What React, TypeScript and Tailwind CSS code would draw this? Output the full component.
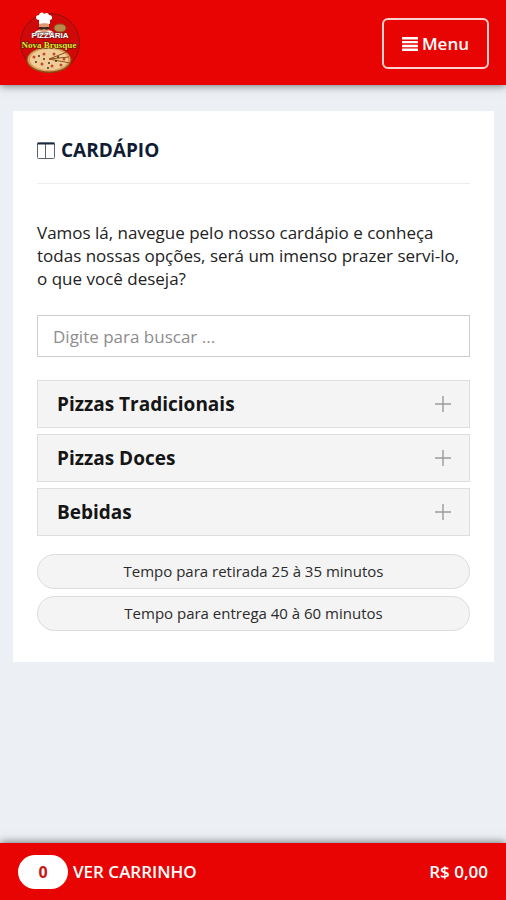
import { useState } from 'react';

const categories = ['Pizzas Tradicionais', 'Pizzas Doces', 'Bebidas'];
const times = ['Tempo para retirada 25 à 35 minutos', 'Tempo para entrega 40 à 60 minutos'];

const Logo = () => (
  <svg viewBox="0 0 64 64" className="size-16" role="img" aria-label="Pizzaria Nova Brusque">
    <circle cx="32" cy="32" r="29.5" fill="#d00807" stroke="#8c1210" />
    {/* chef */}
    <path d="M16 24c0-4 3-5 10-5s10 1 10 5z" fill="#f3efec" />
    <path d="M21 11h10v8c-2 3-8 3-10 0z" fill="#d99a72" />
    <path d="M20 17c2-2 4 0 6-1 2 1 4-1 6 1-1 2-4 2-6 1-2 1-5 1-6-1z" fill="#3d2119" />
    <path d="M21 13V9c-4 0-4-5 0-5 1-3 4-3 5-1 2-2 5-1 5 1 4 0 4 5 1 5v4c-3-1-8-1-11 0z" fill="#fff" />
    <ellipse cx="42" cy="17" rx="6" ry="4" fill="#b98a4c" stroke="#8a5a24" />
    {/* pizza */}
    <ellipse cx="31" cy="49" rx="22.5" ry="13" fill="#8f4d1a" />
    <ellipse cx="31" cy="48.5" rx="21.5" ry="12" fill="#d9a05c" />
    <ellipse cx="31" cy="48.5" rx="19" ry="10.5" fill="#f0cd98" />
    <path d="M31 48l18-7M31 48l21 4M31 48l20-2" stroke="#8f4d1a" strokeWidth="1" />
    <g fill="#c4492a">
      <circle cx="16" cy="46" r="1.5" />
      <circle cx="24" cy="53" r="1.5" />
      <circle cx="26" cy="43" r="1.5" />
      <circle cx="34" cy="55" r="1.5" />
      <circle cx="36" cy="43" r="1.5" />
      <circle cx="43" cy="54" r="1.5" />
      <circle cx="46" cy="48" r="1.5" />
    </g>
    <g fill="#3f3518">
      <circle cx="18" cy="51" r="1" />
      <circle cx="21" cy="45" r="1" />
      <circle cx="26" cy="48" r="1" />
      <circle cx="38" cy="50" r="1" />
      <circle cx="30" cy="57" r="1" />
      <circle cx="31" cy="52" r="1" />
      <circle cx="40" cy="46" r="1" />
    </g>
    <text x="32" y="27" textAnchor="middle" fontFamily="'Liberation Sans', sans-serif" fontWeight="700" fontSize="8" fill="#fff" stroke="#5a2a22" strokeWidth="1" paintOrder="stroke">
      PIZZARIA
    </text>
    <text x="31" y="37" textAnchor="middle" fontFamily="'Liberation Serif', serif" fontWeight="700" fontSize="9" fill="#f5e02c" stroke="#3a2408" strokeWidth="1" paintOrder="stroke">
      Nova Brusque
    </text>
  </svg>
);

const BarsIcon = () => (
  <svg viewBox="0 0 16 14" className="h-[14px] w-4" fill="currentColor" aria-hidden="true">
    <rect y="0" width="16" height="2.4" rx=".5" />
    <rect y="3.9" width="16" height="2.4" rx=".5" />
    <rect y="7.8" width="16" height="2.4" rx=".5" />
    <rect y="11.6" width="16" height="2.4" rx=".5" />
  </svg>
);

const ColumnsIcon = () => (
  <svg viewBox="0 0 18 17" className="h-[17px] w-[18px]" fill="none" stroke="#5a626c" aria-hidden="true">
    <rect x=".5" y="1" width="17" height="15.5" rx="1" />
    <path d="M8.5 1v15.5" />
    <path d="M.5 1.5h17" stroke="#1b2a41" strokeWidth="2" />
  </svg>
);

const PlusIcon = () => (
  <svg viewBox="0 0 16 16" className="size-4" stroke="#9b9b9b" strokeWidth="1.4" aria-hidden="true">
    <path d="M8 0v16M0 8h16" />
  </svg>
);

const Header = () => (
  <header className="flex h-[85px] items-center justify-between bg-[#e90404] pl-[18px] pr-[17px] shadow-[0_1px_8px_rgba(0,0,0,0.5)]">
    <a href="#">
      <Logo />
    </a>
    <button
      type="button"
      className="mt-[2px] flex h-[51px] items-center gap-1 rounded-md border-2 border-[#ffd0d0] px-[18px] text-[17px] font-semibold text-white"
    >
      <BarsIcon />
      Menu
    </button>
  </header>
);

const Accordion = () => {
  const [open, setOpen] = useState('');

  return (
    <div className="mt-[23px] flex flex-col gap-[6px]">
      {categories.map((name) => (
        <button
          key={name}
          type="button"
          aria-expanded={open === name}
          onClick={() => setOpen(open === name ? '' : name)}
          className="flex h-12 items-center justify-between border border-[#dedede] bg-[#f4f4f4] pl-[19px] pr-[18px] text-left text-[19px] font-bold text-[#151515]"
        >
          {name}
          <PlusIcon />
        </button>
      ))}
    </div>
  );
};

const App = () => {
  const [search, setSearch] = useState('');

  return (
    <div className="flex min-h-screen flex-col bg-[#ecf0f4] font-['Open_Sans',sans-serif]">
      <Header />
      <main className="flex-1 py-[26px] pl-[13px] pr-3">
        <section className="bg-white px-6 pb-[31px] pt-[25px]">
          <h1 className="flex items-center gap-[6px] border-b border-[#eeeeee] pb-[19px] text-[19px] leading-7 font-bold text-[#0f1c33]">
            <ColumnsIcon />
            CARDÁPIO
          </h1>
          <p className="mt-[37px] text-[17px] leading-[23px] text-[#222222]">
            Vamos lá, navegue pelo nosso cardápio e conheça todas nossas opções, será um imenso prazer servi-lo, o que você deseja?
          </p>
          <input
            type="text"
            aria-label="Buscar"
            placeholder="Digite para buscar ..."
            value={search}
            onChange={(e) => setSearch(e.target.value)}
            className="mt-[25px] block h-[42px] w-full border border-[#c9ced2] bg-white px-[15px] text-[17px] text-[#222222] placeholder:text-[#8d8d8d]"
          />
          <Accordion />
          <div className="mt-[18px] flex flex-col gap-[7px]">
            {times.map((time) => (
              <p
                key={time}
                className="flex h-[35px] items-center justify-center rounded-full border border-[#dcdcdc] bg-[#f4f4f4] text-[15px] text-[#2b2b2b]"
              >
                {time}
              </p>
            ))}
          </div>
        </section>
      </main>
      <footer className="sticky bottom-0 flex h-[57px] items-center justify-between bg-[#e90404] px-[18px] text-[17px] font-semibold text-white shadow-[0_-1px_8px_rgba(0,0,0,0.5)]">
        <a href="#" className="flex items-center gap-[5px]">
          <span className="flex h-[34px] w-[50px] items-center justify-center rounded-full bg-white text-base font-bold text-[#c41616]">0</span>
          VER CARRINHO
        </a>
        <span>R$ 0,00</span>
      </footer>
    </div>
  );
};

export default App;
